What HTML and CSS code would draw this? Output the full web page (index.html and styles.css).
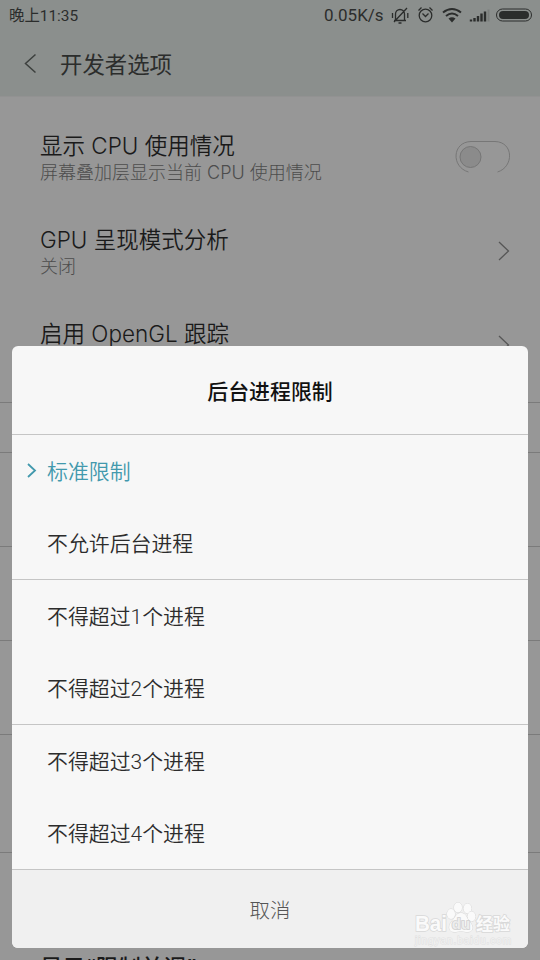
FILE: index.html
```html
<!DOCTYPE html>
<html lang="zh-CN">
<head>
<meta charset="utf-8">
<title>开发者选项</title>
<link rel="stylesheet" href="styles.css">
</head>
<body>
<div class="screen">
  <header class="top">
    <div class="status">
      <span class="clock">晚上11:35</span>
      <span class="speed">0.05K/s</span>
      <svg class="status-icons" width="144" height="20" viewBox="0 0 144 20" fill="none" stroke="#2b2d2c" stroke-width="1.3">
        <path d="M3 15.500h12M4.500 15V9a4.500 4.500 0 0 1 9 0v6M7.500 18h3M16 3 3 17M1.500 8v5M16.800 8v5"/>
        <circle cx="34.500" cy="10.500" r="6.300"/><path d="m31.500 8.500 3 3 3-3M27.500 5.500l3-3M41.500 5.500l-3-3"/>
        <path d="M52 7.500q9-7 18 0M55 11q6-5 12 0" stroke-width="2"/><path d="m57.500 13.500 3.500 4 3.500-4q-3.500-2.500-7 0Z" fill="#2b2d2c" stroke="none"/>
        <path d="M80 16.500v-2M83.500 16.500v-3.500M87 16.500v-5.500M90.500 16.500v-8M94 16.500v-10" stroke-width="2.400"/><path d="M97.500 16.500v-12" stroke="#7b7e7c" stroke-width="2"/>
        <rect x="105.500" y="4" width="35" height="12" rx="6" stroke-width="1"/><rect x="108" y="6" width="30" height="8" rx="4" fill="#2b2d2c" stroke="none"/>
      </svg>
    </div>
    <div class="nav">
      <svg width="14" height="22" viewBox="0 0 14 22" fill="none" stroke="#3d403e" stroke-width="1.500"><path d="M12.500 1.500 2.500 10.500 12.500 19.500"/></svg>
      <h1>开发者选项</h1>
    </div>
  </header>
  <main class="settings">
    <section class="row">
      <div><h2>显示 CPU 使用情况</h2><p>屏幕叠加层显示当前 CPU 使用情况</p></div>
      <svg class="toggle" width="56" height="34" viewBox="0 0 56 34" fill="none"><path d="M14.500 32C-3 27-2 2 17 1.500H41C60 2 60 27 43.500 32" stroke="#777"/><circle cx="16.500" cy="17" r="10.500" fill="#8b8b8b" stroke="#767676"/></svg>
    </section>
    <section class="row">
      <div><h2>GPU 呈现模式分析</h2><p>关闭</p></div>
      <svg class="arrow" width="12" height="20" viewBox="0 0 12 20" fill="none" stroke="#565656" stroke-width="1.300"><path d="m1 1 9.500 9L1 19"/></svg>
    </section>
    <section class="row">
      <div><h2>启用 OpenGL 跟踪</h2><p>无</p></div>
      <svg class="arrow" width="12" height="20" viewBox="0 0 12 20" fill="none" stroke="#565656" stroke-width="1.300"><path d="m1 1 9.500 9L1 19"/></svg>
    </section>
    <div class="rule group-title"></div>
    <div class="rule"></div>
    <div class="rule"></div>
    <div class="rule"></div>
    <div class="rule tall"></div>
    <div class="rule last"><h2>显示“限制并调”</h2></div>
  </main>
</div>
<div class="dialog">
  <h3>后台进程限制</h3>
  <ul>
    <li class="selected"><svg width="10" height="16" viewBox="0 0 10 16" fill="none" stroke="#4299ad" stroke-width="1.800"><path d="m1 1 7 6.500-7 6.500"/></svg>标准限制</li>
    <li>不允许后台进程</li>
    <li class="line">不得超过1个进程</li>
    <li>不得超过2个进程</li>
    <li class="line">不得超过3个进程</li>
    <li>不得超过4个进程</li>
  </ul>
  <button>取消</button>
</div>
<svg class="watermark" width="106" height="50" viewBox="0 0 106 50">
  <text class="name" x="5" y="33" textLength="32" lengthAdjust="spacingAndGlyphs">Bai</text>
  <g class="paw"><ellipse cx="41" cy="16" rx="4" ry="5"/><ellipse cx="48" cy="9.500" rx="4" ry="5"/><ellipse cx="57.500" cy="10.500" rx="4" ry="5"/><ellipse cx="61.500" cy="18.500" rx="4" ry="5"/><path d="M51 15c5 0 5 4 8 8 6 6 4 12-3 11-4-1-7-1-10 0-7 1-9-5-4-11 4-4 4-8 9-8Z"/></g>
  <text class="du" x="51" y="31" text-anchor="middle">du</text>
  <text class="cn" x="66" y="32">经验</text>
  <text class="url" x="5" y="46" textLength="96">jingyan.baidu.com</text>
</svg>
</body>
</html>
```
FILE: styles.css
```css
* { box-sizing: border-box; margin: 0; padding: 0; }
body {
  position: relative;
  width: 540px;
  height: 960px;
  overflow: hidden;
  background: #979797;
  font-family: Roboto, "Noto Sans CJK SC", sans-serif;
}
.screen { height: 960px; overflow: hidden; }
.top { height: 97px; background: #8b8f8d; border-bottom: 1px solid #929292; color: #2b2d2c; }
.status { display: flex; align-items: center; height: 32px; padding: 0 0 2px 9px; }
.clock { font-size: 15.4px; font-weight: 400; width: 315px; margin-bottom: 2px; }
.speed { font-size: 17px; font-weight: 400; width: 67px; white-space: nowrap; }
.status-icons { flex: none; margin-bottom: 1px; }
.nav { display: flex; align-items: center; gap: 23px; height: 64px; padding-left: 23px; }
h1 { font-size: 22.4px; font-weight: 400; line-height: 32px; padding-top: 2px; }
.settings { padding-top: 12px; }
.row { display: flex; align-items: center; justify-content: space-between; height: 94px; padding: 2px 30px 0 40px; }
.row > div { padding-top: 4px; }
h2 { font-family: Inter, "Noto Sans CJK SC", sans-serif; font-size: 22.5px; font-weight: 350; line-height: 28px; color: #1a1a1a; white-space: nowrap; }
.row p { font-family: Inter, "Noto Sans CJK SC", sans-serif; font-size: 18px; font-weight: 300; line-height: 26px; color: #4c4c4c; }
.rule { height: 94px; border-top: 1px solid #7b7b7b; }
.group-title { height: 50px; margin-top: 11px; }
.tall { height: 118px; }
.last { height: 118px; padding: 101px 0 0 40px; }
.last h2 { font-weight: 500; }
.dialog {
  position: absolute;
  left: 12px;
  top: 346px;
  width: 516px;
  height: 602px;
  border-radius: 6px;
  overflow: hidden;
  background: #f7f7f7;
}
h3 { height: 89px; border-bottom: 1px solid #c5c5c5; font-size: 20.9px; font-weight: 500; line-height: 92px; text-align: center; color: #111; }
ul { list-style: none; }
li { position: relative; height: 72px; padding-left: 35px; font-size: 20.9px; font-weight: 350; line-height: 74px; color: #2c2c2c; }
.line { height: 73px; border-top: 1px solid #c5c5c5; }
.selected { color: #4299ad; }
.selected svg { position: absolute; left: 15px; top: 28px; }
button { display: block; width: 100%; height: 79px; padding-bottom: 1px; border: 0; border-top: 1px solid #c5c5c5; background: #f0f0f0; font: 300 20.5px Roboto, "Noto Sans CJK SC", sans-serif; color: #555; }
.line:nth-child(5) + li { height: 72px; }
.watermark { position: absolute; left: 410px; top: 898px; fill: #fafafa; stroke: #d8d8d8; font-family: "Liberation Sans", "Noto Sans CJK SC", sans-serif; paint-order: stroke; stroke-width: 1.6; }
.watermark .name { font-size: 22px; font-weight: 700; }
.paw { stroke-width: 1; }
.du { font-size: 15px; font-weight: 700; fill: #ededed; stroke: #cfcfcf; }
.cn { font-size: 17px; font-weight: 700; }
.url { font-size: 10px; fill: #f2f2f2; stroke: #e0e0e0; stroke-width: 1; }
```
